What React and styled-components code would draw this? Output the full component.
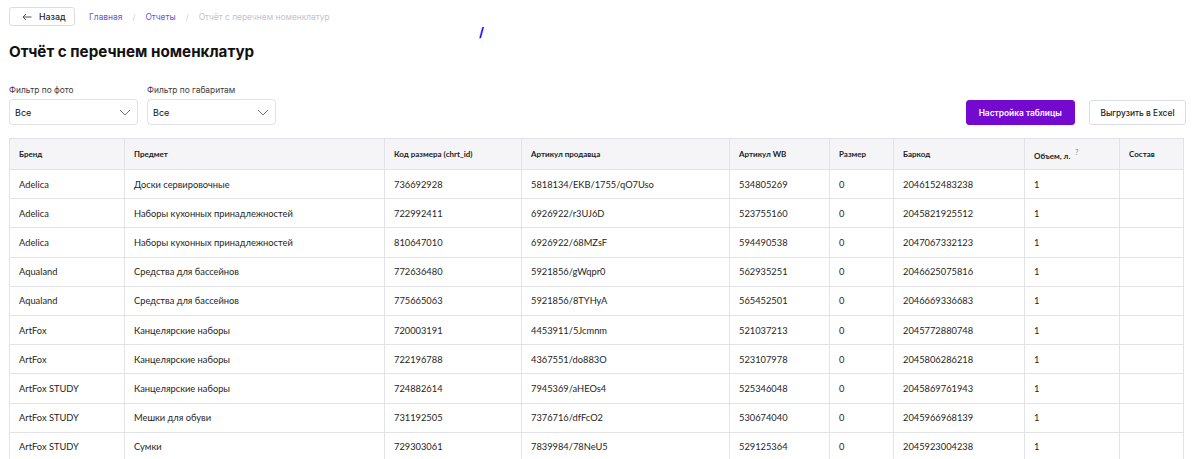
import { createGlobalStyle, styled } from "styled-components";

const Global = createGlobalStyle`
  body {
    margin: 0;
    background: #fff;
    font-family: Inter, "Noto Sans", sans-serif;
    color: #1b1b1f;
  }
`;

const Page = styled.div`
  position: relative;
  padding: 7px 14px 0 9px;
  height: 459px;
  overflow: hidden;
  box-sizing: border-box;
`;

const TopBar = styled.div`
  display: flex;
  align-items: center;
  gap: 14px;
  height: 19px;
`;

const BackButton = styled.button`
  display: flex;
  align-items: center;
  gap: 7px;
  width: 66px;
  height: 19px;
  padding: 0 0 0 12px;
  border: 1px solid #dcdce2;
  border-radius: 3px;
  background: #fff;
  font-family: Inter, sans-serif;
  font-size: 8.8px;
  font-weight: 500;
  color: #222;
  box-sizing: border-box;
`;

const Crumbs = styled.nav`
  display: flex;
  align-items: center;
  gap: 10px;
  font-size: 8.4px;
`;

const Crumb = styled.span`
  color: ${(p) => (p.$current ? "#c3c3cb" : "#5b5ad6")};
`;

const Sep = styled.span`
  color: #cfcfd6;
`;

const Title = styled.h1`
  margin: 16px 0 0;
  font-size: 15.2px;
  font-weight: 700;
  color: #111;
`;

const Controls = styled.div`
  display: flex;
  align-items: flex-end;
  justify-content: space-between;
  margin-top: 24px;
`;

const Filters = styled.div`
  display: flex;
  gap: 9px;
`;

const Filter = styled.div`
  display: flex;
  flex-direction: column;
  gap: 4px;
`;

const Label = styled.label`
  font-size: 8.4px;
  color: #3a3a40;
`;

const Select = styled.div`
  display: flex;
  align-items: center;
  justify-content: space-between;
  width: 129px;
  height: 26px;
  padding: 0 6px 0 5px;
  border: 1px solid #e1e1e6;
  border-radius: 4px;
  font-size: 9px;
  color: #111;
  box-sizing: border-box;
`;

const Actions = styled.div`
  display: flex;
  gap: 14px;
`;

const Button = styled.button`
  height: 25px;
  padding: 0 ${(p) => (p.$primary ? "12px" : "10.5px")};
  border-radius: 3px;
  border: 1px solid ${(p) => (p.$primary ? "#7409cf" : "#dcdce2")};
  background: ${(p) => (p.$primary ? "#7409cf" : "#fff")};
  color: ${(p) => (p.$primary ? "#fff" : "#222")};
  font-family: Inter, sans-serif;
  font-size: 8.4px;
  font-weight: ${(p) => (p.$primary ? 600 : 500)};
`;

const Table = styled.table`
  margin-top: 13px;
  width: 1174px;
  border-collapse: collapse;
  table-layout: fixed;
  font-family: Lato, "Noto Sans", sans-serif;
`;

const Th = styled.th`
  height: 31px;
  padding: 0 9px;
  background: #f5f5f8;
  border: 1px solid #e2e2e8;
  text-align: left;
  font-size: 8px;
  font-weight: 700;
  color: #222;
  box-sizing: border-box;
`;

const Td = styled.td`
  height: 29.2px;
  padding: 0 9px;
  border: 1px solid #e2e2e8;
  font-size: 9.3px;
  color: #1e1e22;
  white-space: nowrap;
  box-sizing: border-box;
`;

const Hint = styled.sup`
  margin-left: 5px;
  font-size: 7px;
  color: #888;
  font-weight: 400;
`;

const Stray = styled.span`
  position: absolute;
  left: 479px;
  top: 24px;
  font-size: 13px;
  color: #1010ff;
  font-weight: 700;
`;

const columns = [
  { title: "Бренд", width: 115 },
  { title: "Предмет", width: 260 },
  { title: "Код размера (chrt_id)", width: 137 },
  { title: "Артикул продавца", width: 208 },
  { title: "Артикул WB", width: 100 },
  { title: "Размер", width: 64 },
  { title: "Баркод", width: 131 },
  { title: "Объем, л.", width: 95, hint: true },
  { title: "Состав", width: 64 },
];

const rows = [
  ["Adelica", "Доски сервировочные", "736692928", "5818134/EKB/1755/qO7Uso", "534805269", "0", "2046152483238", "1", ""],
  ["Adelica", "Наборы кухонных принадлежностей", "722992411", "6926922/r3UJ6D", "523755160", "0", "2045821925512", "1", ""],
  ["Adelica", "Наборы кухонных принадлежностей", "810647010", "6926922/68MZsF", "594490538", "0", "2047067332123", "1", ""],
  ["Aqualand", "Средства для бассейнов", "772636480", "5921856/gWqpr0", "562935251", "0", "2046625075816", "1", ""],
  ["Aqualand", "Средства для бассейнов", "775665063", "5921856/8TYHyA", "565452501", "0", "2046669336683", "1", ""],
  ["ArtFox", "Канцелярские наборы", "720003191", "4453911/5Jcmnm", "521037213", "0", "2045772880748", "1", ""],
  ["ArtFox", "Канцелярские наборы", "722196788", "4367551/do883O", "523107978", "0", "2045806286218", "1", ""],
  ["ArtFox STUDY", "Канцелярские наборы", "724882614", "7945369/aHEOs4", "525346048", "0", "2045869761943", "1", ""],
  ["ArtFox STUDY", "Мешки для обуви", "731192505", "7376716/dfFcO2", "530674040", "0", "2045966968139", "1", ""],
  ["ArtFox STUDY", "Сумки", "729303061", "7839984/78NeU5", "529125364", "0", "2045923004238", "1", ""],
];

const ArrowLeft = () => (
  <svg width="10" height="8" viewBox="0 0 10 8" fill="none" stroke="#555" strokeWidth="1">
    <path d="M9.5 4H1M4 1L1 4l3 3" />
  </svg>
);

const Chevron = () => (
  <svg width="12" height="7" viewBox="0 0 12 7" fill="none" stroke="#777" strokeWidth="1">
    <path d="M1 1l5 5 5-5" />
  </svg>
);

const App = () => (
  <>
    <Global />
    <Page>
      <TopBar>
        <BackButton>
          <ArrowLeft />
          Назад
        </BackButton>
        <Crumbs>
          <Crumb>Главная</Crumb>
          <Sep>/</Sep>
          <Crumb>Отчеты</Crumb>
          <Sep>/</Sep>
          <Crumb $current>Отчёт с перечнем номенклатур</Crumb>
        </Crumbs>
      </TopBar>
      <Stray>/</Stray>
      <Title>Отчёт с перечнем номенклатур</Title>
      <Controls>
        <Filters>
          <Filter>
            <Label>Фильтр по фото</Label>
            <Select>
              Все
              <Chevron />
            </Select>
          </Filter>
          <Filter>
            <Label>Фильтр по габаритам</Label>
            <Select>
              Все
              <Chevron />
            </Select>
          </Filter>
        </Filters>
        <Actions>
          <Button $primary>Настройка таблицы</Button>
          <Button>Выгрузить в Excel</Button>
        </Actions>
      </Controls>
      <Table>
        <colgroup>
          {columns.map((c) => (
            <col key={c.title} style={{ width: c.width }} />
          ))}
        </colgroup>
        <thead>
          <tr>
            {columns.map((c) => (
              <Th key={c.title}>
                {c.title}
                {c.hint && <Hint>?</Hint>}
              </Th>
            ))}
          </tr>
        </thead>
        <tbody>
          {rows.map((r, i) => (
            <tr key={i}>
              {r.map((v, j) => (
                <Td key={j}>{v}</Td>
              ))}
            </tr>
          ))}
        </tbody>
      </Table>
    </Page>
  </>
);

export default App;
